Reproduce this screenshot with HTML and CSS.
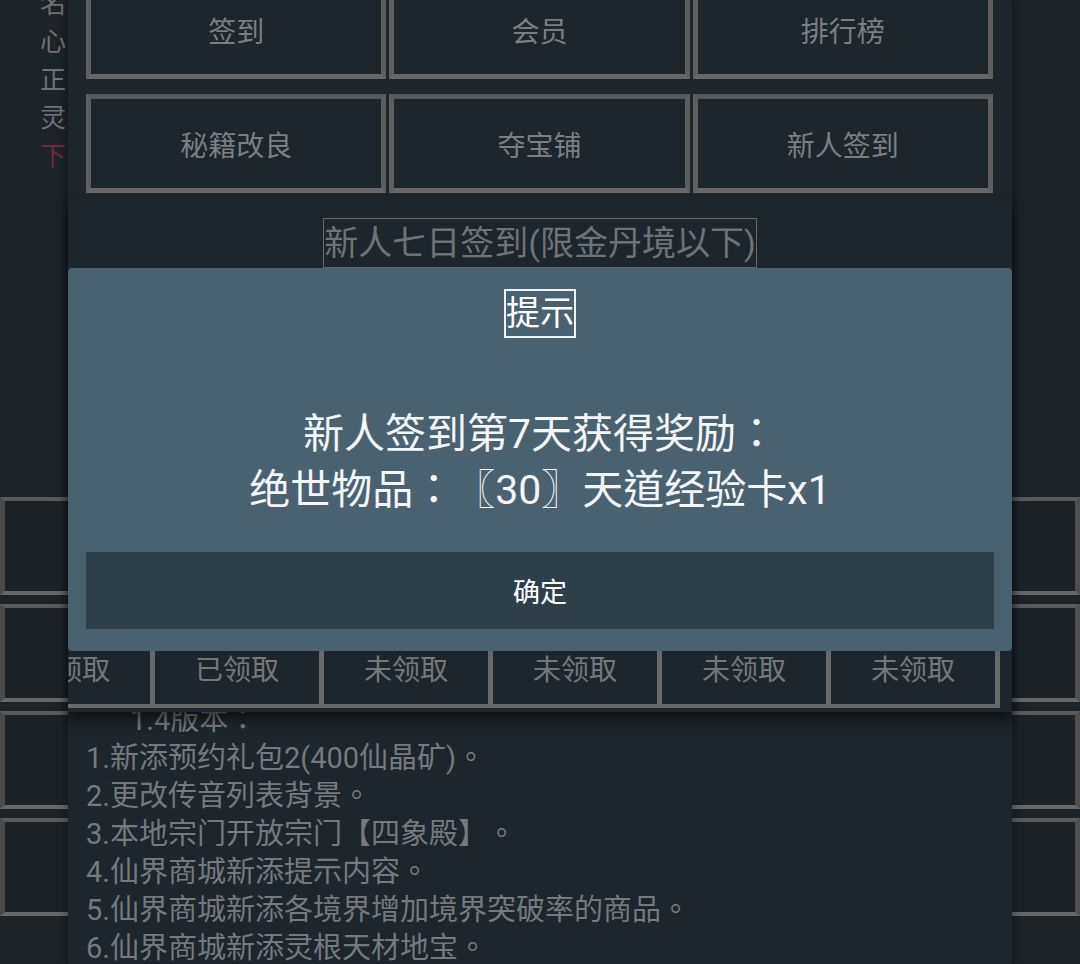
FILE: index.html
```html
<!DOCTYPE html>
<html lang="zh-TW">
  <head>
    <meta charset="UTF-8" />
    <meta name="viewport" content="width=device-width, initial-scale=1.0" />
    <title>修仙</title>
    <link rel="stylesheet" href="styles.css">
  </head>
  <body>
    <div class="page">
      <div class="side-text">
        <span>名</span>
        <span>心</span>
        <span>正</span>
        <span>灵</span>
        <span class="red">下</span>
      </div>
      <div class="side-list">
        <div class="side-box"></div>
        <div class="side-box"></div>
        <div class="side-box"></div>
        <div class="side-box"></div>
      </div>
    </div>

    <div class="panel">
      <div class="menu-grid">
        <div class="menu-btn">签到</div>
        <div class="menu-btn">会员</div>
        <div class="menu-btn">排行榜</div>
        <div class="menu-btn">秘籍改良</div>
        <div class="menu-btn">夺宝铺</div>
        <div class="menu-btn">新人签到</div>
      </div>

      <div class="notes">
        <p class="notes-head">1.4版本：</p>
        <p>1.新添预约礼包2(400仙晶矿)。</p>
        <p>2.更改传音列表背景。</p>
        <p>3.本地宗门开放宗门【四象殿】。</p>
        <p>4.仙界商城新添提示内容。</p>
        <p>5.仙界商城新添各境界增加境界突破率的商品。</p>
        <p>6.仙界商城新添灵根天材地宝。</p>
      </div>
    </div>

    <div class="signin">
      <div class="signin-title">新人七日签到(限金丹境以下)</div>
      <div class="day-row">
        <div class="day-cell">已领取</div>
        <div class="day-cell">已领取</div>
        <div class="day-cell">未领取</div>
        <div class="day-cell">未领取</div>
        <div class="day-cell">未领取</div>
        <div class="day-cell">未领取</div>
      </div>
    </div>

    <div class="alert">
      <div class="alert-title">提示</div>
      <div class="alert-msg">
        新人签到第7天获得奖励：<br />
        绝世物品：〖30〗天道经验卡x1
      </div>
      <button class="alert-btn">确定</button>
    </div>
  </body>
</html>
```

FILE: styles.css
```css
body {
  font-family: Roboto, "Noto Sans CJK TC", sans-serif;
  text-spacing-trim: space-all;
  margin: 0;
  width: 1080px;
  height: 964px;
  overflow: hidden;
  position: relative;
  background-color: #1c2329;
}
.side-text {
  margin-top: -15px;
  padding-left: 40px;
  font-size: 26px;
  line-height: 38px;
  color: #6f7275;
}
.side-text span {
  display: block;
}
.side-text .red {
  color: #6e2a3b;
}
.side-list {
  margin-top: 322px;
}
.side-box {
  height: 98px;
  box-sizing: border-box;
  margin-bottom: 9px;
  border-style: solid;
  border-width: 4px 5px;
  border-color: #5a5a5a #4f4f4f #686868 #4a4a4a;
  background: #1b2329;
}

/* middle panel */
.panel {
  position: absolute;
  left: 68px;
  top: 0;
  width: 944px;
  height: 964px;
  box-sizing: border-box;
  padding: 0 19px 0 18px;
  background: #1d262d;
  box-shadow: 0 0 10px rgba(0, 0, 0, 0.45);
}
.menu-grid {
  display: grid;
  grid-template-columns: repeat(3, 1fr);
  column-gap: 3px;
  row-gap: 15px;
  margin-top: -20px;
}
.menu-btn {
  height: 99px;
  box-sizing: border-box;
  border: 5px solid #5e5e5e;
  border-top-color: #595959;
  border-bottom-color: #676767;
  display: flex;
  align-items: center;
  justify-content: center;
  font-size: 28px;
  color: #7c7f82;
}
.notes {
  margin-top: 508px;
  font-size: 29px;
  line-height: 38px;
  color: #76797d;
}
.notes p {
  margin: 0;
}
.notes .notes-head {
  padding-left: 44px;
}

/* seven day sign-in dialog */
.signin {
  position: absolute;
  left: 68px;
  top: 200px;
  width: 944px;
  height: 512px;
  box-sizing: border-box;
  padding: 18px 0 4px;
  display: flex;
  flex-direction: column;
  overflow: hidden;
  background: #1d262d;
  box-shadow: 0 8px 10px rgba(0, 0, 0, 0.5);
}
.signin-title {
  align-self: center;
  border: 1px solid #686868;
  font-size: 34px;
  line-height: 48px;
  color: #6f7377;
}
.day-row {
  margin-top: auto;
  display: flex;
  justify-content: flex-end;
  padding-right: 12px;
}
.day-cell {
  flex: 0 0 169px;
  height: 76px;
  box-sizing: border-box;
  border-left: 5px solid #686868;
  border-bottom: 4px solid #686868;
  display: flex;
  align-items: center;
  justify-content: center;
  font-size: 28px;
  color: #75787b;
}
.day-cell:last-child {
  flex-basis: 174px;
  border-right: 5px solid #686868;
}

/* alert */
.alert {
  position: absolute;
  left: 68px;
  top: 268px;
  width: 944px;
  height: 383px;
  box-sizing: border-box;
  padding: 21px 18px 22px;
  display: flex;
  flex-direction: column;
  align-items: center;
  border-radius: 4px;
  background: #4a6170;
}
.alert-title {
  border: 2px solid #eef2f4;
  font-size: 34px;
  line-height: 45px;
  color: #ffffff;
}
.alert-msg {
  margin-top: 68px;
  font-size: 41px;
  line-height: 56px;
  text-align: center;
  color: #f4f6f7;
}
.alert-btn {
  margin-top: auto;
  align-self: stretch;
  height: 77px;
  border: none;
  background: #2f3f4a;
  color: #ffffff;
  font-family: inherit;
  font-size: 27px;
}
```
